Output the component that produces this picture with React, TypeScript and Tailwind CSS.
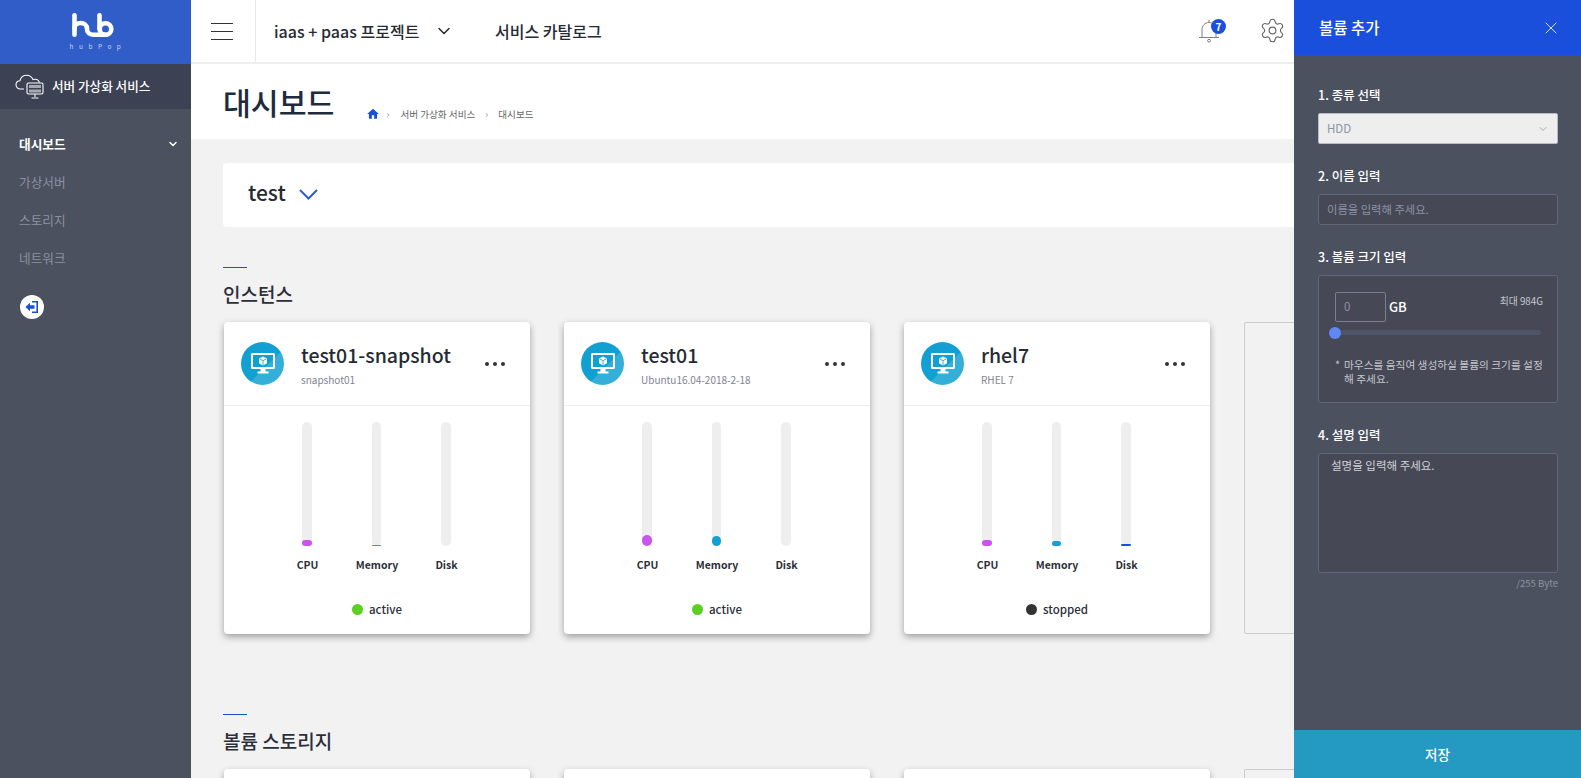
import { ChevronDown, Settings, X } from "lucide-react";
import { MdHome } from "react-icons/md";

const fillColors = {
  cpu: "bg-[#c955ea]",
  memory: "bg-[#14a0d4]",
  disk: "bg-[#1a4fdb]",
};

const instances = [
  { name: "test01-snapshot", image: "snapshot01", cpu: 6, memory: 1, disk: 0, status: "active" },
  { name: "test01", image: "Ubuntu16.04-2018-2-18", cpu: 11, memory: 10, disk: 0, status: "active" },
  { name: "rhel7", image: "RHEL 7", cpu: 6, memory: 5, disk: 2, status: "stopped" },
];

const Logo = () => (
  <svg width="42" height="24" viewBox="0 0 42 24" fill="none" stroke="white" strokeWidth="4.6" strokeLinecap="round" strokeLinejoin="round">
    <path d="M2.5 2.3V21.7" />
    <path d="M2.5 15.5C2.5 12.5 5 10 8.5 10C12.5 10 15 12.5 15 15.5V16C15 19.5 17.5 21.7 21 21.7H33.5" />
    <path d="M27.5 2.3V16" />
    <circle cx="33.5" cy="16" r="5.8" />
  </svg>
);

const CloudServer = () => (
  <svg width="30" height="26" viewBox="0 0 30 26" fill="none" stroke="white" strokeWidth="1.1">
    <path d="M9 15H5.5C3 15 1 13.2 1 10.8C1 8.5 2.8 6.8 5 6.7C5.8 3.4 8.4 1.2 11.6 1.2C14.6 1.2 17 3 18 5.6C18.6 5.3 19.3 5.2 20 5.2C22.2 5.2 24 6.6 24.4 8.6" />
    <rect x="12" y="9" width="16" height="11" rx="1.5" />
    <rect x="14" y="11" width="12" height="3" fill="white" fillOpacity="0.55" stroke="none" />
    <rect x="14" y="15.5" width="12" height="3" fill="white" fillOpacity="0.55" stroke="none" />
    <path d="M20 20V23M16.5 24H23.5" />
  </svg>
);

const LogoutIcon = () => (
  <span className="flex h-6 w-6 items-center justify-center rounded-full bg-white">
    <svg width="14" height="14" viewBox="0 0 14 14" fill="#1a4fdb">
      <path d="M7 1H13V13H7V11.4H11.4V2.6H7Z" />
      <path d="M0.5 7L5 2.8V5.3H9.5V8.7H5V11.2Z" />
    </svg>
  </span>
);

const BellIcon = () => (
  <svg width="22" height="24" viewBox="0 0 22 24" fill="none" stroke="#808080" strokeWidth="1">
    <path d="M1 18.5H21" />
    <path d="M4 18.5V11C4 6.5 7 3.5 11 3.5C15 3.5 18 6.5 18 11V18.5" />
    <path d="M11 3.5V1" />
    <circle cx="11" cy="21.7" r="1.4" />
  </svg>
);

const MonitorBadge = () => (
  <span className="flex h-[43px] w-[43px] shrink-0 items-center justify-center rounded-full bg-[linear-gradient(135deg,#12a0d2_58%,#36afd8_58%)]">
    <svg width="24" height="21" viewBox="0 0 24 21" fill="white">
      <path fillRule="evenodd" d="M1.5 0H22.5C23.3 0 24 0.7 24 1.5V14.5C24 15.3 23.3 16 22.5 16H1.5C0.7 16 0 15.3 0 14.5V1.5C0 0.7 0.7 0 1.5 0ZM2 2V14H22V2Z" />
      <path d="M9.5 16H14.5V18.5H17.5V20.5H6.5V18.5H9.5Z" />
      <path d="M12 3.5L16 5.4V10.2L12 12.5L8 10.2V5.4Z" />
      <path d="M8.3 5.8L12 7.6L15.7 5.8M12 7.6V12" fill="none" stroke="#12a0d2" strokeWidth="0.8" />
    </svg>
  </span>
);

const Meter = ({ label, value, color, wide = true }: { label: string; value: number; color: string; wide?: boolean }) => (
  <div className="flex w-[69.5px] flex-col items-center">
    <div className={`flex h-[124px] flex-col justify-end rounded-[5px] bg-[#eeeeee] ${wide ? "w-[10px]" : "w-[9px]"}`}>
      {value > 0 && <div className={`w-full rounded-full ${color}`} style={{ height: value }} />}
    </div>
    <span className="ml-[2px] mt-[11px] text-[10.5px] font-bold leading-[16px] text-[#2b2f3a]">{label}</span>
  </div>
);

const InstanceCard = ({ item }: { item: (typeof instances)[number] }) => (
  <div className="h-[312px] w-[306px] shrink-0 rounded-[4px] bg-white shadow-[0_3px_7px_rgba(0,0,0,0.35)]">
    <div className="flex h-[84px] items-center border-b border-[#eeeeee] pl-[17px] pr-[25px]">
      <MonitorBadge />
      <div className="ml-[17px] mt-[2px] min-w-0 flex-1">
        <div className="text-[19.5px] font-medium leading-[28px] text-[#262a33]">{item.name}</div>
        <div className="mt-[3px] text-[10px] leading-[16px] text-[#7f8393]">{item.image}</div>
      </div>
      <div className="flex gap-[4px]">
        <span className="h-[4px] w-[4px] rounded-full bg-[#333333]" />
        <span className="h-[4px] w-[4px] rounded-full bg-[#333333]" />
        <span className="h-[4px] w-[4px] rounded-full bg-[#333333]" />
      </div>
    </div>
    <div className="flex justify-center pr-[2px] pt-[16px]">
      <Meter label="CPU" value={item.cpu} color={fillColors.cpu} />
      <Meter label="Memory" value={item.memory} color={fillColors.memory} wide={false} />
      <Meter label="Disk" value={item.disk} color={fillColors.disk} />
    </div>
    <div className="mt-[28px] flex items-center justify-center gap-[6px]">
      <span className={`h-[11px] w-[11px] rounded-full ${item.status === "active" ? "bg-[#5ccf24]" : "bg-[#333333]"}`} />
      <span className="text-[11.5px] font-medium leading-[16px] text-[#2b2f3a]">{item.status}</span>
    </div>
  </div>
);

const Header = () => (
  <header className="flex h-[64px] shrink-0 items-center border-b-2 border-[#eeeeee] bg-white">
    <div className="flex h-full w-[65px] flex-col items-center justify-center gap-[7px] border-r border-[#e8e8e8] pr-[2px]">
      <span className="h-px w-[22px] bg-[#333333]" />
      <span className="h-px w-[22px] bg-[#333333]" />
      <span className="h-px w-[22px] bg-[#333333]" />
    </div>
    <span className="ml-[18px] w-[146px] text-[16px] font-medium whitespace-nowrap text-[#262a33]">iaas + paas 프로젝트</span>
    <ChevronDown className="ml-[14px] h-[20px] w-[20px] text-[#262a33]" strokeWidth={1.8} />
    <span className="ml-[41px] w-[106px] text-[16px] font-medium whitespace-nowrap text-[#262a33]">서비스 카탈로그</span>
    <div className="relative ml-[597px] h-[24px]">
      <BellIcon />
      <span className="absolute left-[13px] top-0 flex h-[15px] w-[15px] items-center justify-center rounded-full bg-[#1a4fdb] text-[10px] font-bold leading-none text-white">7</span>
    </div>
    <Settings className="ml-[39px] mb-[2px] h-[27px] w-[27px] text-[#666666]" strokeWidth={1} />
  </header>
);

const Sidebar = () => (
  <aside className="flex h-full w-[191px] shrink-0 flex-col bg-[#4c515f]">
    <div className="flex h-[64px] flex-col items-center bg-[#315dc8] pt-[13px]">
      <div className="mr-[5px] h-[24px]">
        <Logo />
      </div>
      <span className="mt-[5px] pl-[5px] text-[6.5px] leading-[8px] tracking-[5.5px] text-[#c6d3f1]">hubPop</span>
    </div>
    <div className="flex h-[45px] items-center gap-[7px] bg-[#3d4154] pl-[15px]">
      <CloudServer />
      <span className="text-[12.6px] font-medium text-white">서버 가상화 서비스</span>
    </div>
    <nav className="flex flex-col pl-[19px] pr-[12px] pt-[16px] text-[12.7px]">
      <div className="flex h-[38px] items-center justify-between font-bold text-white">
        대시보드
        <ChevronDown className="h-[12px] w-[12px]" strokeWidth={3} />
      </div>
      <div className="flex h-[38px] items-center text-[#8b8f9f]">가상서버</div>
      <div className="flex h-[38px] items-center text-[#8b8f9f]">스토리지</div>
      <div className="flex h-[38px] items-center text-[#8b8f9f]">네트워크</div>
      <div className="mt-[18px] ml-px">
        <LogoutIcon />
      </div>
    </nav>
  </aside>
);

const TitleBar = () => (
  <div className="flex h-[75px] shrink-0 items-start bg-white pl-[32px]">
    <h1 className="mt-[16px] text-[30.3px] font-medium leading-[44px] text-[#1e2b3c]">대시보드</h1>
    <div className="mt-[43px] ml-[31px] flex items-center text-[9.6px] leading-[14px] text-[#666666]">
      <MdHome className="h-[14px] w-[14px] text-[#1a4fdb]" />
      <span className="ml-[7px] text-[#888888]">›</span>
      <span className="ml-[11px]">서버 가상화 서비스</span>
      <span className="ml-[10px] text-[#888888]">›</span>
      <span className="ml-[10px]">대시보드</span>
    </div>
  </div>
);

const SectionTitle = ({ title }: { title: string }) => (
  <div>
    <div className="h-px w-[24px] bg-[#1a4fdb]" />
    <h2 className="mt-[12px] text-[19px] font-medium leading-[28px] text-[#2b2f3a]">{title}</h2>
  </div>
);

const AddCard = () => <div className="h-[312px] w-[306px] shrink-0 rounded-[2px] border border-[#cccccc]" />;

const VolumeCard = () => <div className="h-[312px] w-[306px] shrink-0 rounded-[4px] bg-white shadow-[0_3px_7px_rgba(0,0,0,0.35)]" />;

const VolumePanel = () => (
  <div className="absolute bottom-0 right-0 top-0 flex w-[287px] flex-col bg-[#4c515f] text-white">
    <div className="flex h-[55px] shrink-0 items-center justify-between bg-[#1a4fdb] pl-[25px] pr-[20px]">
      <span className="text-[15.5px] font-medium">볼륨 추가</span>
      <X className="h-[20px] w-[20px]" strokeWidth={1} />
    </div>
    <div className="flex-1 pl-[24px] pr-[23px] pt-[30px] text-[12.5px]">
      <div className="font-medium leading-[20px]">1. 종류 선택</div>
      <div className="mt-[8px] flex h-[31px] items-center justify-between rounded-[2px] border border-[#b9bbc2] bg-[#eeeeee] pl-[8px] pr-[8px] text-[11.5px] text-[#8d92a6]">
        HDD
        <ChevronDown className="h-[12px] w-[12px] text-[#aaaaaa]" strokeWidth={2} />
      </div>
      <div className="mt-[22px] font-medium leading-[20px]">2. 이름 입력</div>
      <div className="mt-[8px] flex h-[31px] items-center rounded-[3px] border border-[#636679] bg-[#464955] pl-[8px] text-[11.3px] text-[#8d92a6]">
        이름을 입력해 주세요.
      </div>
      <div className="mt-[22px] font-medium leading-[20px]">3. 볼륨 크기 입력</div>
      <div className="mt-[8px] h-[128px] rounded-[3px] border border-[#636679] bg-[#464955] pl-[16px] pr-[16px] pt-[16px]">
        <div className="flex items-start justify-between">
          <div className="flex items-center gap-[3px]">
            <span className="flex h-[30px] w-[51px] items-center rounded-[2px] border border-[#7c7f8e] pl-[8px] text-[11.5px] text-[#8d92a6]">0</span>
            <span className="text-[13px] font-medium">GB</span>
          </div>
          <span className="-mr-[2px] mt-[1px] text-[9.8px] leading-[16px] text-[#c4c6cd]">최대 984G</span>
        </div>
        <div className="relative mt-[8px] h-[5px] rounded-full bg-[#4f5568]">
          <span className="absolute left-[-6px] top-[-3.5px] h-[12px] w-[12px] rounded-full bg-[#5f87f5]" />
        </div>
        <div className="mt-[23px] flex gap-[4px] whitespace-nowrap text-[10.7px] leading-[14px] text-[#c4c6cd]">
          <span>*</span>
          <span>
            마우스를 움직여 생성하실 볼륨의 크기를 설정
            <br />해 주세요.
          </span>
        </div>
      </div>
      <div className="mt-[22px] font-medium leading-[20px]">4. 설명 입력</div>
      <div className="mt-[8px] h-[120px] rounded-[3px] border border-[#636679] bg-[#464955] pl-[12px] pt-[2px] text-[11.5px] leading-[18px] text-[#d0d2d8]">
        설명을 입력해 주세요.
      </div>
      <div className="mt-[2px] text-right text-[9.6px] leading-[16px] text-[#8d92a6]">/255 Byte</div>
    </div>
    <div className="flex h-[48px] shrink-0 items-center justify-center bg-[#2499c2] text-[13.5px] font-medium">저장</div>
  </div>
);

export default function App() {
  return (
    <div className="relative flex h-screen overflow-hidden bg-[#f2f2f2] font-['Noto_Sans_CJK_KR','Noto_Sans',sans-serif]">
      <Sidebar />
      <main className="flex min-w-0 flex-1 flex-col overflow-hidden">
        <Header />
        <TitleBar />
        <div className="pl-[32px] pt-[24px]">
          <div className="flex h-[64px] items-center rounded-[4px] bg-white pl-[25px]">
            <span className="mb-[5px] text-[21px] font-medium text-[#262a33]">test</span>
            <svg className="ml-[13px] mb-[2px]" width="19" height="11" viewBox="0 0 19 11" fill="none" stroke="#315dc8" strokeWidth="2">
              <path d="M1 1L9.5 9.5L18 1" />
            </svg>
          </div>
          <div className="mt-[40px]">
            <SectionTitle title="인스턴스" />
            <div className="ml-px mt-[14px] flex gap-[34px]">
              {instances.map((item) => (
                <InstanceCard key={item.name} item={item} />
              ))}
              <AddCard />
            </div>
          </div>
          <div className="mt-[80px]">
            <SectionTitle title="볼륨 스토리지" />
            <div className="ml-px mt-[14px] flex gap-[34px]">
              <VolumeCard />
              <VolumeCard />
              <VolumeCard />
              <AddCard />
            </div>
          </div>
        </div>
      </main>
      <VolumePanel />
    </div>
  );
}
